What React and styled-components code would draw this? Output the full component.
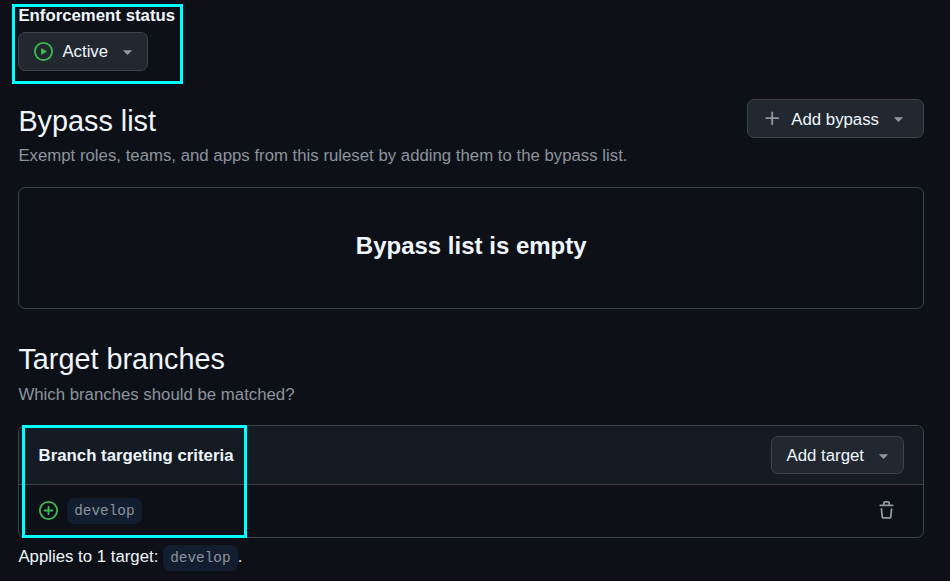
import styled, { createGlobalStyle } from "styled-components";

const GlobalStyle = createGlobalStyle`
  * {
    box-sizing: border-box;
  }

  body {
    margin: 0;
    background: #0d1117;
    color: #f0f6fc;
    font-family: "Liberation Sans", Arial, sans-serif;
    font-size: 16.8px;
    line-height: 25px;
    overflow: hidden;
  }
`;

const Page = styled.main`
  position: relative;
  height: 581px;
  padding: 3px 26px 0 18.4px;
  overflow: hidden;
  border-bottom: 1px solid #05070b;
`;

const Highlight = styled.div`
  position: absolute;
  left: ${({ $x }) => $x}px;
  top: ${({ $y }) => $y}px;
  width: ${({ $width }) => $width}px;
  height: ${({ $height }) => $height}px;
  border: 3px solid #00ffff;
  pointer-events: none;
`;

const Label = styled.div`
  font-weight: 700;
  margin-bottom: 4px;
`;

const Button = styled.button`
  display: flex;
  align-items: center;
  height: ${({ $height }) => $height || 39}px;
  padding: 0 ${({ $endPad }) => $endPad || 10}px 0 15px;
  border: 1px solid #3d444d;
  border-radius: 7px;
  background: #212830;
  color: #f0f6fc;
  font: inherit;
  white-space: nowrap;
`;

const ButtonText = styled.span`
  margin: ${({ $top }) => $top || 0}px 10px 0 ${({ $start }) => $start || 0}px;
`;

const Icon = styled.svg`
  flex: none;
  display: block;
  fill: ${({ $color }) => $color || "#9198a1"};
`;

const SectionHeader = styled.header`
  display: flex;
  justify-content: space-between;
  height: 39px;
  margin-top: ${({ $top }) => $top}px;
`;

const Title = styled.h2`
  margin: 0;
  font-size: 28.8px;
  font-weight: 400;
  line-height: 44px;
`;

const Description = styled.p`
  margin: ${({ $top }) => $top}px 0 ${({ $bottom }) => $bottom}px;
  color: #8d949e;
`;

const Blankslate = styled.div`
  display: flex;
  align-items: center;
  justify-content: center;
  height: 122px;
  padding-bottom: 5px;
  border: 1px solid #3d444d;
  border-radius: 7px;
`;

const BlankslateTitle = styled.h3`
  margin: 0;
  font-size: 24px;
  line-height: 36px;
`;

const Table = styled.section`
  height: 113px;
  border: 1px solid #3d444d;
  border-radius: 7px;
  overflow: hidden;
`;

const TableHeader = styled.div`
  display: flex;
  align-items: center;
  justify-content: space-between;
  height: 59px;
  padding: 0 19px 0 19.2px;
  border-bottom: 1px solid #3d444d;
  background: #151b23;
  font-weight: 700;

  button {
    font-weight: 400;
  }
`;

const TableRow = styled.div`
  display: flex;
  align-items: center;
  height: 51px;
  padding: 0 27px 0 19.6px;

  > :last-child {
    margin-left: auto;
  }
`;

const BranchName = styled.code`
  padding: 5px 7.2px;
  border-radius: 7px;
  background: #121d2f;
  color: #8d949e;
  font-family: "Liberation Mono", monospace;
  font-size: 14.4px;
  line-height: 16px;
`;

const RowBranch = styled(BranchName)`
  margin: 1px 0 0 9px;
`;

const Summary = styled.p`
  margin: 6px 0 0;
`;

const PlayIcon = () => (
  <Icon width="19" height="19" viewBox="0 0 16 16" $color="#3fb950">
    <path d="M8 0a8 8 0 1 1 0 16A8 8 0 0 1 8 0ZM1.5 8a6.5 6.5 0 1 0 13 0 6.5 6.5 0 0 0-13 0Zm4.879-2.773 4.264 2.559a.25.25 0 0 1 0 .428l-4.264 2.559A.25.25 0 0 1 6 10.559V5.442a.25.25 0 0 1 .379-.215Z" />
  </Icon>
);

const PlusCircleIcon = () => (
  <Icon width="19" height="19" viewBox="0 0 16 16" $color="#3fb950">
    <path d="M8 0a8 8 0 1 1 0 16A8 8 0 0 1 8 0ZM1.5 8a6.5 6.5 0 1 0 13 0 6.5 6.5 0 0 0-13 0Zm7.25-3.25v2.5h2.5a.75.75 0 0 1 0 1.5h-2.5v2.5a.75.75 0 0 1-1.5 0v-2.5h-2.5a.75.75 0 0 1 0-1.5h2.5v-2.5a.75.75 0 0 1 1.5 0Z" />
  </Icon>
);

const PlusIcon = () => (
  <Icon width="19" height="19" viewBox="0 0 16 16">
    <path d="M7.75 2a.75.75 0 0 1 .75.75V7h4.25a.75.75 0 0 1 0 1.5H8.5v4.25a.75.75 0 0 1-1.5 0V8.5H2.75a.75.75 0 0 1 0-1.5H7V2.75A.75.75 0 0 1 7.75 2Z" />
  </Icon>
);

const CaretIcon = () => (
  <Icon width="19" height="19" viewBox="0 0 16 16">
    <path d="m4.427 7.427 3.396 3.396a.25.25 0 0 0 .354 0l3.396-3.396A.25.25 0 0 0 11.396 7H4.604a.25.25 0 0 0-.177.427Z" />
  </Icon>
);

const TrashIcon = () => (
  <Icon width="19" height="19" viewBox="0 0 16 16">
    <path d="M11 1.75V3h2.25a.75.75 0 0 1 0 1.5H2.75a.75.75 0 0 1 0-1.5H5V1.75C5 .784 5.784 0 6.75 0h2.5C10.216 0 11 .784 11 1.75ZM4.496 6.675l.66 6.6a.25.25 0 0 0 .249.225h5.19a.25.25 0 0 0 .249-.225l.66-6.6a.75.75 0 0 1 1.492.149l-.66 6.6A1.748 1.748 0 0 1 10.595 15h-5.19a1.75 1.75 0 0 1-1.741-1.575l-.66-6.6a.75.75 0 1 1 1.492-.15ZM6.5 1.75V3h3V1.75a.25.25 0 0 0-.25-.25h-2.5a.25.25 0 0 0-.25.25Z" />
  </Icon>
);

const App = () => {
  return (
    <>
      <GlobalStyle />
      <Page>
        <Label>Enforcement status</Label>
        <Button>
          <PlayIcon />
          <ButtonText $start={9}>Active</ButtonText>
          <CaretIcon />
        </Button>

        <SectionHeader $top={28}>
          <Title>Bypass list</Title>
          <Button $endPad={15}>
            <PlusIcon />
            <ButtonText $top={2} $start={9}>
              Add bypass
            </ButtonText>
            <CaretIcon />
          </Button>
        </SectionHeader>
        <Description $top={5} $bottom={19}>
          Exempt roles, teams, and apps from this ruleset by adding them to the
          bypass list.
        </Description>
        <Blankslate>
          <BlankslateTitle>Bypass list is empty</BlankslateTitle>
        </Blankslate>

        <SectionHeader $top={28}>
          <Title>Target branches</Title>
        </SectionHeader>
        <Description $top={6} $bottom={18}>
          Which branches should be matched?
        </Description>
        <Table>
          <TableHeader>
            Branch targeting criteria
            <Button $height={38}>
              <ButtonText>Add target</ButtonText>
              <CaretIcon />
            </Button>
          </TableHeader>
          <TableRow>
            <PlusCircleIcon />
            <RowBranch>develop</RowBranch>
            <TrashIcon />
          </TableRow>
        </Table>
        <Summary>
          Applies to 1 target: <BranchName>develop</BranchName>.
        </Summary>

        <Highlight $x={12} $y={4} $width={171} $height={80} />
        <Highlight $x={22} $y={425} $width={225} $height={113} />
      </Page>
    </>
  );
};

export default App;
